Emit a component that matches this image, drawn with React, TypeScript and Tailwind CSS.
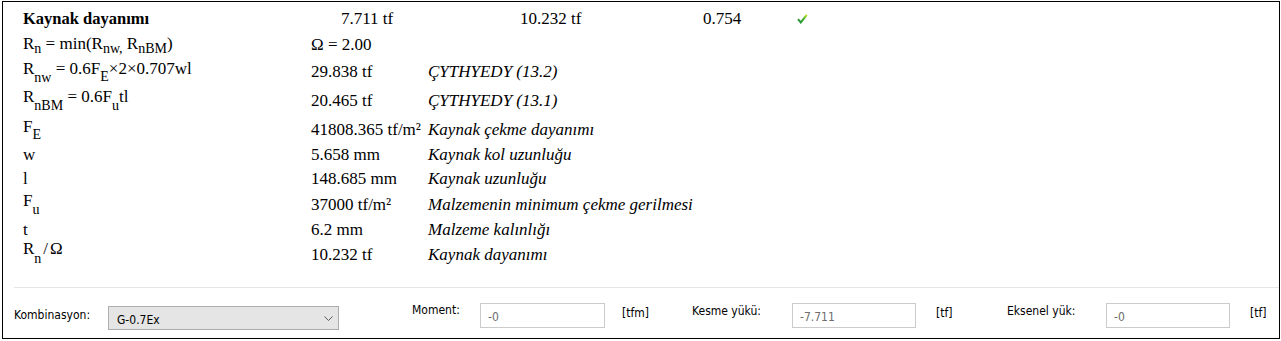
import React from "react";

const serif = "font-['Liberation_Serif','Times_New_Roman',serif]";
const ui = "font-['DejaVu_Sans_Condensed','DejaVu_Sans',sans-serif] font-stretch-condensed";

function Row({
  h,
  raise = "",
  label,
  value,
  desc,
}: {
  h: string;
  raise?: string;
  label: React.ReactNode;
  value: React.ReactNode;
  desc?: string;
}) {
  return (
    <div className={`flex items-center ${h}`}>
      <div className={`w-[288px] shrink-0 whitespace-nowrap leading-[19px] ${raise}`}>{label}</div>
      <div className="w-[117px] shrink-0 whitespace-nowrap leading-[19px]">{value}</div>
      {desc && <div className="whitespace-nowrap italic leading-[19px]">{desc}</div>}
    </div>
  );
}

function Check() {
  return (
    <svg width="11" height="10" viewBox="0 0 11 10" fill="none">
      <defs>
        <linearGradient id="ck" x1="0" y1="1" x2="1" y2="0">
          <stop offset="0" stopColor="#1e8c34" />
          <stop offset="0.55" stopColor="#3fae2a" />
          <stop offset="1" stopColor="#c4e81c" />
        </linearGradient>
      </defs>
      <path d="M1 5.2 L3.8 8.4 L9.8 0.8" stroke="url(#ck)" strokeWidth="2" />
    </svg>
  );
}

function Field({ value }: { value: string }) {
  return (
    <div className="mt-[15px] flex h-[25px] shrink-0 items-center border border-[#cbcbcb] bg-white pl-[7px] pt-[2px] text-[#6d6d6d]">
      {value}
    </div>
  );
}

export default function App() {
  return (
    <div className="h-[341px] w-[1281px] bg-white pl-[2px] pt-[1px]">
      <div className="h-[338px] w-[1278px] border border-black">
        {/* results */}
        <div className={`pl-[20px] pt-[4px] text-[17px] text-black ${serif}`}>
          <div className="flex h-[25px] items-center leading-[19px]">
            <div className="w-[318px] shrink-0 text-[16.5px] font-bold">Kaynak dayanımı</div>
            <div className="w-[179px] shrink-0">7.711 tf</div>
            <div className="w-[183px] shrink-0">10.232 tf</div>
            <div className="w-[94px] shrink-0">0.754</div>
            <Check />
          </div>
          <Row
            h="h-[27px]"
            raise="-translate-y-[1px]"
            label={
              <>
                R<sub className="text-[14px] -bottom-[4px]">n</sub> = min(R
                <sub className="text-[14px] -bottom-[4px]">nw,</sub> R
                <sub className="text-[14px] -bottom-[4px]">nBM</sub>)
              </>
            }
            value="Ω = 2.00"
          />
          <Row
            h="h-[27px]"
            raise="-translate-y-[3px]"
            label={
              <>
                R<sub className="text-[14px] -bottom-[8px]">nw</sub> = 0.6F
                <sub className="text-[14px] -bottom-[7px]">E</sub>×2×0.707wl
              </>
            }
            value="29.838 tf"
            desc="ÇYTHYEDY (13.2)"
          />
          <Row
            h="h-[31px]"
            raise="-translate-y-[4px]"
            label={
              <>
                R<sub className="text-[14px] -bottom-[8px]">nBM</sub> = 0.6F
                <sub className="text-[14px] -bottom-[8px]">u</sub>tl
              </>
            }
            value="20.465 tf"
            desc="ÇYTHYEDY (13.1)"
          />
          <Row
            h="h-[27px]"
            raise="-translate-y-[3px]"
            label={
              <>
                F<sub className="text-[14px] -bottom-[7px]">E</sub>
              </>
            }
            value="41808.365 tf/m²"
            desc="Kaynak çekme dayanımı"
          />
          <Row h="h-[23px]" label="w" value="5.658 mm" desc="Kaynak kol uzunluğu" />
          <Row h="h-[25px]" label="l" value="148.685 mm" desc="Kaynak uzunluğu" />
          <Row
            h="h-[27px]"
            raise="-translate-y-[4px]"
            label={
              <>
                F<sub className="text-[14px] -bottom-[8px]">u</sub>
              </>
            }
            value="37000 tf/m²"
            desc="Malzemenin minimum çekme gerilmesi"
          />
          <Row h="h-[23px]" label="t" value="6.2 mm" desc="Malzeme kalınlığı" />
          <Row
            h="h-[27px]"
            raise="-translate-y-[6px]"
            label={
              <>
                R<sub className="text-[14px] -bottom-[9px]">n</sub>
                <span className="mx-[2px]">/</span>Ω
              </>
            }
            value="10.232 tf"
            desc="Kaynak dayanımı"
          />
        </div>

        <div className="ml-[11px] mt-[19px] h-px bg-[#e6e6e6]" />

        {/* load combination bar */}
        <div className={`flex items-start pl-[11px] text-[12px] leading-[14px] text-black ${ui}`}>
          <div className="mt-[20px] w-[94px] shrink-0">Kombinasyon:</div>
          <div className="mt-[18px] flex h-[24px] w-[231px] shrink-0 items-center justify-between border border-[#adadad] bg-[#e5e5e5] pl-[8px] pr-[5px]">
            <span className="pt-[3px]">G-0.7Ex</span>
            <svg width="9" height="5" viewBox="0 0 9 5" fill="none">
              <path d="M0.5 0.5 L4.5 4.5 L8.5 0.5" stroke="#5a5a5a" strokeWidth="1" />
            </svg>
          </div>

          <div className="ml-[73px] mt-[15px] w-[68px] shrink-0">Moment:</div>
          <div className="w-[125px]">
            <Field value="-0" />
          </div>
          <div className="ml-[17px] mt-[18px] w-[70px] shrink-0">[tfm]</div>

          <div className="mt-[16px] w-[100px] shrink-0">Kesme yükü:</div>
          <div className="w-[124px]">
            <Field value="-7.711" />
          </div>
          <div className="ml-[20px] mt-[18px] w-[71px] shrink-0">[tf]</div>

          <div className="mt-[16px] w-[99px] shrink-0">Eksenel yük:</div>
          <div className="w-[124px]">
            <Field value="-0" />
          </div>
          <div className="ml-[20px] mt-[18px] shrink-0">[tf]</div>
        </div>
      </div>
    </div>
  );
}
